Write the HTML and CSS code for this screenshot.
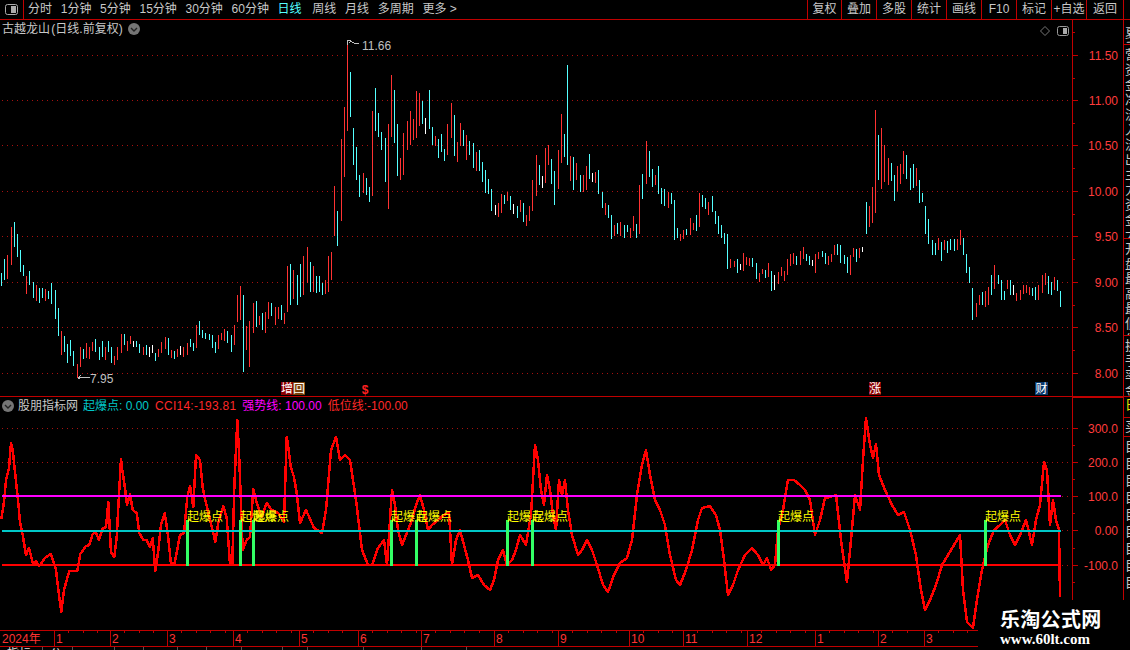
FILE: index.html
```html
<!DOCTYPE html>
<html lang="zh">
<head>
<meta charset="utf-8">
<title>古越龙山</title>
<link rel="stylesheet" href="styles.css">
</head>
<body>
<div class="app">
  <header class="toolbar">
    <div class="tool-icon">
      <svg width="14" height="12" viewBox="0 0 14 12"><rect x=".5" y=".5" width="12" height="10" rx="2" fill="none" stroke="#aaa"/><rect x="6" y="2" width="5" height="7" fill="#aaa"/></svg>
    </div>
    <nav class="periods">
      <span>分时</span><span>1分钟</span><span>5分钟</span><span>15分钟</span><span>30分钟</span><span>60分钟</span>
      <span class="active">日线</span><span>周线</span><span>月线</span><span>多周期</span><span>更多 &gt;</span>
    </nav>
    <div class="tools">
      <span>复权</span><span>叠加</span><span>多股</span><span>统计</span><span>画线</span><span>F10</span><span>标记</span><span>+自选</span><span>返回</span>
    </div>
    <div class="toolbar-end"></div>
  </header>

  <div class="workspace">
    <div class="charts">
      <section class="panel upper">
        <div class="plot">
          <svg id="kline" class="layer" viewBox="0 20 1072 376"></svg>
          <div class="legend">
            <span class="title">古越龙山 (日线.前复权)</span>
            <svg class="chev" width="12" height="12" viewBox="0 0 12 12"><circle cx="6" cy="6" r="6" fill="#757575"/><path d="M3 5l3 3 3-3" fill="none" stroke="#222" stroke-width="1.4"/></svg>
          </div>
          <div class="plot-tools">
            <svg width="10" height="10" viewBox="0 0 10 10"><path d="M5 .5L9.500 5 5 9.500.5 5z" fill="none" stroke="#777"/></svg>
            <svg width="13" height="12" viewBox="0 0 13 12"><rect x=".5" y="1.500" width="11" height="9" rx="2" fill="none" stroke="#999"/><rect x="6" y="3" width="4" height="6" fill="#aaa"/></svg>
          </div>
        </div>
        <svg id="scale-up" class="scale" viewBox="1072 20 51 376"></svg>
      </section>

      <section class="panel lower">
        <div class="plot">
          <svg id="indicator" class="layer" viewBox="0 397 1072 233"></svg>
          <div class="legend legend-low">
            <svg class="chev" width="12" height="12" viewBox="0 0 12 12"><circle cx="6" cy="6" r="6" fill="#757575"/><path d="M3 5l3 3 3-3" fill="none" stroke="#222" stroke-width="1.4"/></svg>
            <span class="name">股朋指标网</span>
            <span class="v-cyan">起爆点: 0.00</span>
            <span class="v-red v-wide">CCI14:-193.81</span>
            <span class="v-mag">强势线: 100.00</span>
            <span class="v-red">低位线:-100.00</span>
          </div>
        </div>
        <svg id="scale-low" class="scale" viewBox="1072 397 51 233"></svg>
      </section>

      <svg id="time" class="time" viewBox="0 630 1123 17"></svg>

      <div class="tabs">
        <span class="t1">指标</span><span class="t2">公式</span><span class="t3"></span><span class="t4"></span><span class="t5"></span><span class="t6"></span><span class="t7"></span><span class="t8"></span><span class="t9"></span><span class="t10"></span><span class="t11"></span><span class="t12"></span>
      </div>
    </div>

    <aside class="side">
      <div class="cell c1"><p>夏委委</p></div>
      <div class="cell c2"><p>营资金净流入流出主力资金大单</p></div>
      <div class="cell c3"><p>开盘最高最低价格</p></div>
      <div class="cell c4"><p>换手率金额</p></div>
      <div class="cell c5"><p class="yellow">日</p></div>
      <div class="cell c6"><p>买</p></div>
      <div class="cell c7"><p>目目目目目目目目目</p></div>
    </aside>
  </div>

  <div class="watermark">
    <strong>乐淘公式网</strong>
    <em>www.60lt.com</em>
  </div>
</div>
<script src="script.js"></script>
</body>
</html>
```

FILE: styles.css
```css
* { box-sizing: border-box; margin: 0; padding: 0; }
html, body { width: 1130px; height: 650px; overflow: hidden; background: #000; }
body { font: 12px/16px "Liberation Sans", "Noto Sans CJK SC", sans-serif; color: #c8c8c8; }

.app { position: relative; display: flex; flex-direction: column; width: 1130px; height: 650px; }

.toolbar { display: flex; flex: none; height: 20px; align-items: stretch; border-bottom: 1px solid #c00000; }
.tool-icon { display: flex; flex: none; width: 24px; align-items: center; justify-content: center; padding-left: 1px; border-right: 1px solid #c00000; }
.periods { display: flex; flex: none; gap: 8.7px; padding-left: 4px; line-height: 19px; white-space: nowrap; }
.periods .active { color: #55ffff; margin-right: 2px; }
.tools { display: flex; margin-left: auto; border-right: 1px solid #c00000; line-height: 19px; }
.tools span { width: 35px; border-left: 1px solid #c00000; text-align: center; white-space: nowrap; }
.tools span:first-child { width: 34px; }
.tools span:last-child { width: 37px; }
.toolbar-end { flex: none; width: 6px; }

.workspace { display: flex; flex: 1; min-height: 0; }
.charts { display: flex; flex: none; flex-direction: column; width: 1123px; }

.panel { display: flex; }
.upper { height: 377px; border-bottom: 1px solid #c00000; }
.lower { height: 233px; }
.plot { position: relative; flex: none; width: 1072px; }
.layer { position: absolute; left: 0; top: 0; width: 1072px; height: 100%; display: block; }
.scale { display: block; flex: none; width: 51px; height: 100%; }

.legend { position: relative; display: flex; align-items: center; gap: 5px; height: 18px; padding-left: 2px; white-space: nowrap; }
.legend .chev { flex: none; }
.title { word-spacing: -2px; }
.legend-low { height: 18px; padding-left: 2px; gap: 6px; }
.legend-low .name { margin-left: -2px; margin-right: -1px; }
.v-cyan { color: #00c8c8; }
.v-red { color: #ff2828; }
.v-wide { letter-spacing: .25px; }
.v-mag { color: #ff00ff; }
.plot-tools { position: absolute; top: 5px; right: 2px; display: flex; align-items: center; gap: 7px; }

.time { display: block; flex: none; width: 1123px; height: 17px; }

.tabs { display: flex; flex: 1; min-height: 0; overflow: hidden; line-height: 14px; color: #ddd; }
.tabs span { flex: none; height: 3px; overflow: hidden; border-right: 1px solid #555; padding-left: 7px; }
.t1 { width: 43px; } .t2 { width: 30px; } .t3 { width: 42px; } .t4 { width: 29px; }
.t5 { width: 34px; } .t6 { width: 29px; } .t7 { width: 35px; } .t8 { width: 41px; }
.t9 { width: 25px; } .t10 { width: 56px; } .t11 { width: 58px; } .t12 { width: 45px; }

.side { display: flex; flex: none; flex-direction: column; width: 7px; overflow: hidden; border-left: 1px solid #c00000; color: #c8c8c8; font-size: 13px; }
.cell { flex: none; overflow: hidden; border-bottom: 1px solid #c00000; padding-left: 1px; }
.cell p { width: 14px; line-height: 15px; }
.c1 { height: 25px; padding-top: 5px; }
.c2 { height: 194px; padding-top: 2px; }
.c3 { height: 97px; padding-top: 2px; }
.c4 { height: 61px; padding-top: 2px; }
.c5 { height: 21px; }
.c6 { height: 19px; padding-top: 1px; }
.c7 { flex: 1; border-bottom: 0; padding-top: 1px; }
.c7 p { line-height: 17px; }
.yellow { color: #e8e800; }

.watermark { position: absolute; left: 978px; top: 600px; display: flex; flex-direction: column; width: 152px; height: 50px; padding: 7px 0 0 22px; background: #000; color: #fff; }
.watermark strong { font: 700 20px/24px "Noto Sans CJK SC", sans-serif; letter-spacing: .3px; white-space: nowrap; }
.watermark em { font: 700 15px/17px "Liberation Serif", serif; font-style: normal; white-space: nowrap; }
```

FILE: script.js
```js
var NS = 'http://www.w3.org/2000/svg';
function el(parent, tag, attrs, text) {
  var n = document.createElementNS(NS, tag);
  for (var k in attrs) n.setAttribute(k, attrs[k]);
  if (text !== undefined) n.textContent = text;
  parent.appendChild(n);
  return n;
}
var FONT = '"Liberation Sans","Noto Sans CJK SC",sans-serif';
function label(p, x, y, s, fill, anchor) {
  return el(p, 'text', { x: x, y: y, fill: fill, 'font-size': 12, 'font-family': FONT, 'text-anchor': anchor || 'start' }, s);
}
function path(p, d, stroke, w, extra) {
  var a = { d: d, fill: 'none', stroke: stroke, 'stroke-width': w || 1, 'shape-rendering': 'crispEdges' };
  for (var k in extra || {}) a[k] = extra[k];
  el(p, 'path', a);
}

/* Candles: groups of [x origin, y origin, "z top bottom colour;..."] read at 3x scale */
var groups = [
  [0, 210, '4 190 230 c;13 148 212 c;22 135 207 r;34 52 165 r;43 37 113 c;52 72 141 c;61 121 188 c;70 165 200 c;79 198 252 r;88 183 225 c;100 216 264 c;109 225 273 r;118 234 279 c;127 234 264 c;136 237 273 r;145 243 267 c;154 219 282 c;166 240 327 c;175 294 378 c;184 363 435 r;193 378 426 c;202 402 459 c;211 390 438 c;220 423 468 c;232 462 505 r;241 411 471 r;250 417 447 c;259 399 444 r;268 411 447 r;277 396 423 r;286 387 426 c;298 411 450 c;307 393 441 c;316 411 450 r;325 393 426 c;334 411 459 c;343 438 465 r;352 411 450 r;364 372 429 r;373 372 405 c;382 393 423 r;391 378 402 r;400 393 411 w;409 393 411 c;418 402 429 c;430 411 435 r;439 405 435 c;448 411 441 w;457 405 429 w;466 429 453 c;475 417 441 r;484 396 429 r;496 381 417 r;505 384 435 c;514 420 444 r;523 423 447 c;532 417 441 r;541 408 435 w;550 411 441 r;562 399 435 r;571 387 411 c;580 399 423 c;589 345 414 r;598 333 375 c;607 360 384 c;616 369 387 c;628 372 390 c;637 375 414 c;646 396 429 c;655 375 417 r;664 369 390 r;673 357 393 r;682 363 399 c;694 375 426 c;703 345 405 r;712 255 336 r;721 228 330 r;730 255 486 c;739 348 420 r;748 333 471 r;760 279 369 r;769 273 351 c;778 318 345 r;787 309 360 c;796 306 369 r;805 276 327 r;814 279 318 c;826 291 345 r;835 291 327 r;844 285 330 c;853 309 342 r;862 168 306 r;871 162 285 c;880 180 267 r;892 195 285 c'],
  [0, 0, '900 792 891 c;909 768 885 r;921 741 849 r;930 786 876 c;939 798 876 r;948 828 879 c;957 828 876 c;966 849 885 c;975 840 882 r;984 768 876 r;993 756 840 r'],
  [300, 30, '103 468 620 r;112 543 650 c;124 327 573 r;133 231 441 r;142 40 303 r;151 126 261 c;160 294 405 c;169 351 450 c;178 435 501 c;190 429 489 r;199 444 495 c;208 471 516 c;217 243 498 r;226 174 303 c;235 249 321 c;244 306 360 c;256 324 456 c;265 282 537 r;274 135 321 r;283 180 339 c;292 282 438 c;301 384 450 r;310 309 435 r;322 273 360 r;331 243 345 r;340 267 330 r;349 183 324 r;358 189 288 r;367 213 282 c;376 264 312 w;388 180 297 c;397 291 345 c;406 318 348 r;415 327 384 c;424 312 366 c;433 357 393 c;442 282 375 r;454 219 324 r;463 255 378 c;472 336 396 r;481 279 348 r;490 300 348 c;499 315 390 r;508 333 375 c;520 339 414 c;529 366 423 r;538 360 423 c;547 396 456 c;556 420 489 c;565 447 492 c;574 477 543 c;586 525 555 w;595 519 561 r;604 492 549 r;613 495 522 c;622 486 513 r;631 498 540 c;640 522 552 w;652 528 564 c;661 510 546 r;670 519 576 c;679 555 588 r;688 528 573 r;697 450 543 r;709 375 498 r;718 405 465 c;727 438 474 w;736 354 459 r;745 345 405 r;754 387 462 c;763 423 525 c;775 360 477 r;784 252 399 r;793 312 381 c;802 105 405 c;811 378 453 r;820 381 480 c;829 399 450 r;841 435 486 c;850 435 486 r;859 408 480 r;868 372 447 c'],
  [590, 100, '7 219 246 w;16 216 249 r;25 210 282 c;37 276 324 c;46 309 345 r;55 315 354 c;64 345 417 c;73 375 408 r;82 369 402 c;91 366 408 r;103 375 414 c;112 375 396 c;121 384 414 r;130 348 393 r;139 372 414 c;148 255 402 r;157 222 297 c;169 123 252 r;178 153 231 c;187 207 261 c;196 225 255 r;205 198 282 c;214 264 312 c;223 267 318 c;235 276 324 r;244 279 312 c;253 300 420 c;262 384 414 c;271 402 423 r;280 390 417 r;289 387 405 c;301 354 405 r;310 369 390 r;319 345 393 c;328 279 381 r;337 285 321 c;346 294 327 c;355 306 345 r;367 288 336 c;376 333 372 c;385 348 402 c;394 375 414 c;403 399 432 c;412 402 507 c;421 477 504 r;433 483 501 r;442 477 519 c;451 492 510 w;460 459 513 r;469 471 495 r;478 474 498 r;487 474 501 c;499 489 537 c;508 519 546 r;517 507 522 r;526 510 534 c;535 489 531 r;544 513 573 c;553 525 570 w;565 516 552 r;574 501 528 r;583 513 543 r;592 477 525 r;601 462 498 r;610 459 492 r;619 468 495 c;631 453 495 r;640 441 477 r;649 462 483 c;658 468 495 c;667 480 498 w;676 462 519 r;685 456 477 r;697 453 471 c;706 459 492 c;715 468 495 r;724 462 486 r;733 435 465 r;742 432 465 c;751 435 489 c;763 465 492 c;772 471 519 c;781 465 525 r;790 444 471 r;799 447 486 c;808 444 474 r;817 441 456 w;829 306 402 c;838 318 381 r;847 261 369 r;856 30 339 r;865 105 240 c'],
  [850, 100, '94 84 267 r;103 135 246 r;115 174 255 r;124 189 243 c;133 225 303 c;142 198 276 r;151 192 252 r;160 153 222 r;169 165 237 c;181 204 270 c;190 192 264 c;199 204 258 r;208 240 309 c;217 279 306 c;226 318 402 c;235 357 432 c;247 420 465 c;256 429 465 c;265 414 450 r;274 426 483 c;283 420 450 r;292 423 459 c;301 417 450 c;313 417 453 c;322 417 450 r;331 390 435 r;340 414 465 c;349 462 519 c;358 501 549 c;367 564 660 c;379 609 651 r;388 585 615 r;397 576 615 c;406 573 621 r;415 561 615 r;424 525 585 c;433 495 567 r;445 525 552 c;454 540 600 c;463 573 600 c;472 540 567 r;481 540 585 c;490 555 585 w;499 579 603 r;511 570 600 r;520 555 582 r;529 555 579 r;538 561 585 r;547 564 588 c;556 561 600 c;565 555 600 r;577 525 579 r;586 519 555 r;595 528 582 c;604 546 585 c;613 531 570 r;622 540 573 c;631 573 621 c']
];
var colors = { r: '#ff3232', c: '#54ffff', w: '#ffffff' };

var k = document.getElementById('kline');
var gridUp = [55, 100, 145, 191, 236, 282, 327, 373];
gridUp.forEach(function (y) { path(k, 'M2 ' + (y + .5) + 'H1072', '#a81010', 1, { 'stroke-dasharray': '1 4' }); });
var d = { r: '', c: '', w: '' };
groups.forEach(function (g) {
  g[2].split(';').forEach(function (s) {
    var p = s.split(' ');
    var x = g[0] + Math.floor(p[0] / 3) + .5;
    d[p[3]] += 'M' + x + ' ' + (g[1] + Math.floor(p[1] / 3)) + 'V' + (g[1] + Math.floor(p[2] / 3));
  });
});
for (var c in d) path(k, d[c], colors[c]);

/* High and low markers */
path(k, 'M347.500 45V40.500H351M349 42.500l2-1 3 1.500 2 .5 3 .5', '#c0c0c0');
label(k, 362, 50, '11.66', '#c0c0c0');
path(k, 'M78 377.500H90M78 378h2M80.500 375.500l-2 2 2 2', '#c0c0c0');
label(k, 90, 383, '7.95', '#c0c0c0');

/* Event badges */
function badge(x, w, bg, s, col) {
  el(k, 'rect', { x: x, y: 382, width: w, height: 13, fill: bg });
  label(k, x + w / 2, 393, s, col || '#fff', 'middle');
}
badge(281, 12, '#8c0000', '增');
badge(293, 12, '#7a4008', '回');
label(k, 365, 394, '$', '#ff2020', 'middle').setAttribute('font-weight', 'bold');
badge(869, 12, '#8c0000', '涨');
badge(1035, 13, '#0a3a6e', '财');

/* Price scale */
function scale(svg, rows, minor, x0, top, bot) {
  path(svg, 'M' + (x0 + .5) + ' ' + top + 'V' + bot, '#c00000');
  rows.forEach(function (r) {
    path(svg, 'M' + x0 + ' ' + (r[0] + .5) + 'h6', '#c00000');
    label(svg, 1118, r[0] + 5, r[1], '#ff3c3c', 'end');
  });
  minor.forEach(function (y) { path(svg, 'M' + x0 + ' ' + (y + .5) + 'h3', '#c00000'); });
}
var priceLabels = ['11.50', '11.00', '10.50', '10.00', '9.50', '9.00', '8.50', '8.00'];
scale(document.getElementById('scale-up'),
  gridUp.map(function (y, i) { return [y, priceLabels[i]]; }),
  [32, 78, 123, 168, 214, 259, 305, 350], 1072, 20, 396);

/* Indicator */
var ind = document.getElementById('indicator');
[428, 462, 496, 530, 565].forEach(function (y) {
  path(ind, 'M2 ' + (y + .5) + 'H1072', '#a81010', 1, { 'stroke-dasharray': '1 4' });
});
var pts = '1.3 519 4 502 6 480 9 468 11 443 12.7 450 15 472 18 500 20 522 22.7 535 26 555 29 548 33.3 565 36 561 39.3 566 45 558 51 554 56 570 58.7 593 61.3 612 64 590 69.3 571 77.3 571 80.3 554 86 546 89.3 545 92.3 535 95.3 531 99 540 102.3 529 106 527 108.3 502 109.3 520 111 552 114.3 557 116.7 537 118.7 500 121 459 122.3 470 125 488 127 505 130 494 132.7 510 136.7 513 139.3 533 143.3 540 146.7 540 150 547 152.7 538 155.3 571 158 553 161 525 164.7 513 167.7 533 171 564 174.7 563 180 535 184 533 187.3 497 190 486 193.3 507 196 455 200 460 202.7 488 205.7 502 213.3 533 215.3 542 218.3 523 223.3 506 226.7 518 230 564 232.3 564 234.3 487 237.3 420 239 452 242.7 550 246.7 540 250 537 253.3 489 256.7 503 261.7 517 266.7 503 271.7 510 278.3 513 284 522 286.7 437 288.3 447 290.7 467 294 477 296.7 493 300 523 306 510 314 528 322 533 326 510 331 450 336 437 340 460 345 455 350 460 356 500 362 550 368 565 372 565 378 548 384 540 387 565 390 520 392 490 395 505 398 530 402 545 406 535 412 520 416 505 420 495 424 510 428 530 432 525 438 520 444 515 449 512 452 565 456 540 460 530 464 545 468 560 472 578 478 575 484 585 490 590 494 580 498 560 503 550 507 565 512 560 516 550 520 535 526 545 531 515 535 445 538 460 541 490 544 505 547 475 550 490 553 515 556 530 559 480 562 495 565 480 568 510 572 535 578 555 582 550 587 540 592 550 597 565 603 585 608 592 614 575 620 563 627 558 632 540 637 495 642 465 646 450 650 475 655 500 660 510 665 525 670 555 676 580 680 585 686 570 692 550 698 520 702 508 710 506 716 515 720 530 724 560 728 595 733 585 738 570 745 555 752 548 758 555 763 565 767 558 771 570 775 565 778 530 783 510 788 480 794 480 800 485 805 490 810 500 815 535 820 520 825 498 830 497 836 495 841 540 847 582 851 540 855 495 860 510 863 460 866 418 870 445 873 458 876 444 879 475 885 490 892 505 898 515 904 512 910 530 916 555 921 590 925 610 930 600 936 585 942 565 948 555 954 545 960 535 963 590 967 622 973 628 977 600 982 570 988 545 994 530 1000 525 1005 520 1010 535 1015 545 1020 535 1026 520 1032 545 1036 520 1040 505 1044 462 1047 470 1050 525 1053 500 1056 520 1059 530 1060 597';
el(ind, 'polyline', { points: pts, fill: 'none', stroke: '#ff0000', 'stroke-width': 2.5, 'stroke-linejoin': 'round', 'shape-rendering': 'crispEdges' });
path(ind, 'M2 496H1061', '#ff00ff', 2);
path(ind, 'M2 530.500H1061', '#00c8c8', 2);
path(ind, 'M2 565H1061', '#ff0000', 2);

[187, 240, 253, 391, 416, 507, 532, 778, 985].forEach(function (x) {
  el(ind, 'rect', { x: x - 1, y: 520, width: 3, height: 46, fill: '#33ff66' });
  label(ind, x, 521, '起爆点', '#ffff00');
});

scale(document.getElementById('scale-low'),
  [[428, '300.0'], [462, '200.0'], [496, '100.0'], [530, '0.00'], [565, '-100.0']],
  [445, 479, 513, 548, 582], 1072, 397, 630);
path(document.getElementById('scale-low'), 'M1072 397.500H1123', '#c00000');

/* Time axis */
var t = document.getElementById('time');
path(t, 'M0 630.500H1123M0 646.500H1123', '#c00000');
var marks = [[54, '1'], [110, '2'], [167, '3'], [233, '4'], [299, '5'], [358, '6'], [421, '7'], [494, '8'], [558, '9'], [629, '10'], [683, '11'], [747, '12'], [815, '1'], [878, '2'], [924, '3']];
label(t, 2, 643, '2024年', '#ff3232');
var ticks = '';
marks.forEach(function (m, i) {
  ticks += 'M' + (m[0] + .5) + ' 631V646';
  label(t, m[0] + 2, 643, m[1], '#ff3232');
  var next = i + 1 < marks.length ? marks[i + 1][0] : 978;
  for (var x = m[0] + 14; x < next - 5; x += 14.5) ticks += 'M' + (Math.round(x) + .5) + ' 631V633';
});
path(t, ticks, '#c00000');
```
